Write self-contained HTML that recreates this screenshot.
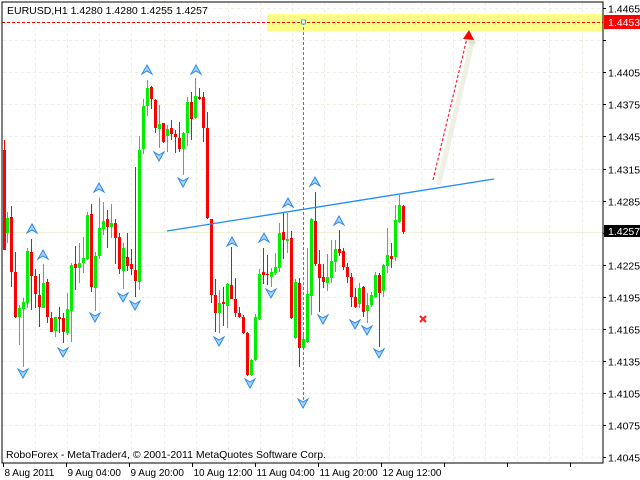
<!DOCTYPE html>
<html><head><meta charset="utf-8"><style>
html,body{margin:0;padding:0;background:#fff;}
svg{display:block;font-family:"Liberation Sans",sans-serif;}
</style></head><body>
<svg id="s" width="640" height="480" xmlns="http://www.w3.org/2000/svg">
<rect width="640" height="480" fill="#fff"/>
<g id="grid" stroke="#efeedd" stroke-width="1" stroke-dasharray="3,3"></g>
<rect x="267" y="14" width="336" height="17" fill="#ffff88"/>
<line x1="2" y1="232.5" x2="603" y2="232.5" stroke="#f0efd8" stroke-width="1"/>
<g id="candles"></g>
<line x1="167" y1="231" x2="494" y2="179" stroke="#1e8cff" stroke-width="1.3"/>
<line x1="2" y1="22.5" x2="603" y2="22.5" stroke="#ff0000" stroke-dasharray="3,2"/>
<line x1="303.5" y1="22" x2="303.5" y2="400" stroke="#1e8cff" stroke-dasharray="3,2"/>
<rect x="301.5" y="20" width="4" height="4" fill="#fff" stroke="#1e8cff" stroke-width="0.8"/>
<line x1="439" y1="183" x2="472" y2="43" stroke="#efefe4" stroke-width="5" stroke-linecap="round"/>
<circle cx="472" cy="42" r="3" fill="#d6e8c4" stroke="#e4e4d8"/>
<line x1="433" y1="180" x2="467" y2="38" stroke="#ff2040" stroke-width="1.2" stroke-dasharray="3,2"/>
<polygon points="469,30 474,40 463,39" fill="#ff0000"/>
<g stroke="#ff2020" stroke-width="2"><line x1="420" y1="316" x2="426" y2="322"/><line x1="426" y1="316" x2="420" y2="322"/></g>
<g id="arrows"></g>
<rect x="2" y="2" width="601" height="461" fill="none" stroke="#000" stroke-width="1"/>
<g id="axis" font-size="10.5" fill="#000"></g>
<rect x="604" y="15" width="36" height="14" fill="#ff0000"/>
<text x="608" y="26" font-size="10.5" fill="#fff">1.4453</text>
<rect x="604" y="225" width="36" height="12" fill="#000"/>
<rect x="604" y="225" width="36" height="12" fill="#000"/>
<text x="608" y="235" font-size="10.5" fill="#fff">1.4257</text>
<text x="7" y="14" font-size="10.5">EURUSD,H1  1.4280 1.4280 1.4255 1.4257</text>
<text x="6" y="458" font-size="10.5">RoboForex - MetaTrader4, © 2001-2011 MetaQuotes Software Corp.</text>
</svg>
<script>
var NS="http://www.w3.org/2000/svg";
function el(p,n,a,t){var e=document.createElementNS(NS,n);for(var k in a)e.setAttribute(k,a[k]);if(t)e.textContent=t;document.getElementById(p).appendChild(e);}
var prices=["1.4465","1.4435","1.4405","1.4375","1.4345","1.4315","1.4285","1.4255","1.4225","1.4195","1.4165","1.4135","1.4105","1.4075","1.4045"];
for(var i=0;i<15;i++){var y=Math.round(8+32.1*i)+0.5;
 if(i!=7)el("grid","line",{x1:3,y1:y,x2:602,y2:y});
 el("axis","line",{x1:603,y1:y,x2:606,y2:y,stroke:"#000"});
 if(i!=1&&i!=7)el("axis","text",{x:608,y:y+4},prices[i]);}
for(var x=35;x<602;x+=32.15){var xx=Math.round(x)+0.5;el("grid","line",{x1:xx,y1:3,x2:xx,y2:462});}
var tl=["8 Aug 2011","9 Aug 04:00","9 Aug 20:00","10 Aug 12:00","11 Aug 04:00","11 Aug 20:00","12 Aug 12:00"];
for(var i=0;i<10;i++){var x=Math.round(3+63*i)+0.5;el("axis","line",{x1:x,y1:463,x2:x,y2:467,stroke:"#000"});
 if(i<7)el("axis","text",{x:x+1,y:476,"font-size":"10"},tl[i]);}
var C=[[4,150,250,140,250,0],[7,218,233,212,243,1],[11,217,272,206,287,0],[15,272,317,252,318,0],[19,308,317,305,345,1],[23,302,309,298,367,1],[27,251,303,248,308,1],[31,252,276,239,310,0],[35,276,294,269,308,0],[39,295,307,274,327,0],[43,283,308,264,308,1],[47,282,317,279,323,0],[51,318,332,312,332,0],[55,317,331,317,337,1],[59,317,319,307,333,0],[63,318,332,313,343,0],[67,309,333,293,335,1],[71,265,311,263,342,1],[75,264,268,246,290,0],[79,263,268,243,283,1],[83,258,263,237,273,1],[87,215,259,212,260,1],[91,214,287,204,292,0],[95,256,288,252,311,1],[99,228,256,198,259,1],[103,221,229,202,235,1],[107,219,227,210,248,0],[111,223,227,204,238,1],[115,223,238,219,264,0],[119,237,269,233,274,0],[123,248,271,243,289,1],[127,257,266,233,271,0],[131,264,269,249,275,0],[135,270,281,167,297,0],[139,150,282,136,290,1],[143,106,149,99,154,1],[147,88,106,80,116,1],[151,87,99,86,109,0],[155,100,128,99,133,0],[159,124,129,105,148,1],[163,123,142,123,143,0],[167,129,136,125,152,1],[171,128,134,120,140,0],[175,134,137,130,153,0],[179,138,149,122,152,0],[183,133,149,132,175,1],[187,102,133,97,146,1],[191,102,119,92,140,0],[195,96,118,78,119,1],[199,97,99,88,100,0],[203,97,128,92,142,0],[207,128,218,112,219,0],[211,219,295,219,303,0],[215,295,313,279,332,0],[219,303,313,290,333,1],[223,302,304,287,326,0],[227,284,306,283,328,1],[231,285,299,247,299,0],[235,299,313,278,317,0],[239,313,317,307,318,0],[243,317,333,315,334,0],[247,333,375,332,376,0],[251,360,375,359,376,1],[255,317,360,314,361,1],[259,274,319,269,320,1],[263,272,275,248,284,0],[267,274,275,255,285,0],[271,272,277,268,287,1],[275,267,273,253,275,1],[279,233,268,223,272,1],[283,232,240,213,259,0],[287,239,241,213,253,1],[291,238,318,231,319,0],[295,282,338,279,339,1],[299,283,348,278,367,0],[303,339,348,335,349,1],[307,294,342,248,343,1],[311,219,296,218,315,1],[315,221,264,192,266,0],[319,264,278,250,312,0],[323,277,282,264,288,0],[327,277,283,254,291,1],[331,261,278,240,283,1],[335,249,262,240,272,1],[339,249,253,230,256,0],[343,251,267,248,270,0],[347,267,277,263,283,0],[351,277,297,273,307,0],[355,297,307,288,308,0],[359,288,304,283,308,1],[363,287,312,286,317,0],[367,305,311,293,323,1],[371,295,305,292,307,1],[375,275,297,272,298,1],[379,275,293,273,347,0],[383,265,291,264,297,1],[387,255,266,228,273,1],[391,256,259,243,268,0],[395,220,257,205,261,1],[399,205,222,195,223,1],[403,206,232,205,234,0]];
C.forEach(function(c){var col=c[5]?"#00ee00":"#ff0000";
 el("candles","line",{x1:c[0]+0.5,y1:c[3],x2:c[0]+0.5,y2:c[4],stroke:col});
 el("candles","rect",{x:c[0]-1,y:c[1],width:3,height:Math.max(1,c[2]-c[1]),fill:col});});
var U=[[32,229],[43,255],[99,188],[147,70],[196,70],[232,242],[264,238],[288,203],[315,182],[339,221]];
var D=[[23,373],[63,352],[95,317],[123,297],[135,305],[159,156],[183,182],[219,341],[250,383],[271,293],[303,403],[323,319],[355,324],[367,330],[379,353]];
U.forEach(function(a){var x=a[0],y=a[1];el("arrows","path",{d:"M"+x+","+(y-5)+"L"+(x+5)+","+(y+4)+"L"+x+","+(y+1)+"L"+(x-5)+","+(y+4)+"Z",fill:"#a8d4ff",stroke:"#2a88ee","stroke-width":"1"});});
D.forEach(function(a){var x=a[0],y=a[1];el("arrows","path",{d:"M"+x+","+(y+5)+"L"+(x+5)+","+(y-4)+"L"+x+","+(y-1)+"L"+(x-5)+","+(y-4)+"Z",fill:"#a8d4ff",stroke:"#2a88ee","stroke-width":"1"});});
</script>
</body></html>
